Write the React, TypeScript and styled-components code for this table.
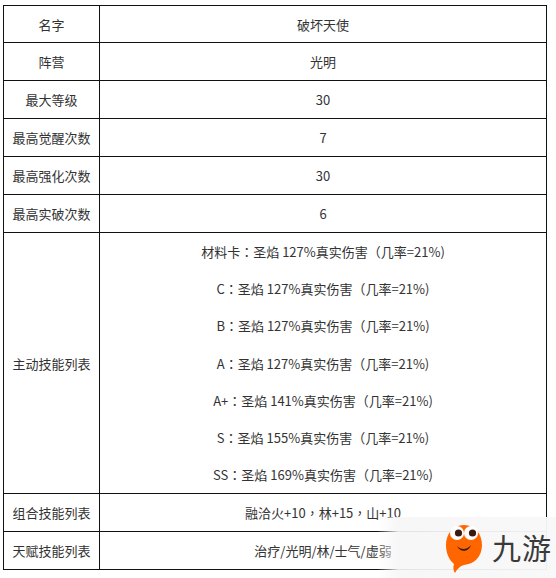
import React from 'react';
import styled, { createGlobalStyle } from 'styled-components';

const GlobalStyle = createGlobalStyle`
  html, body {
    margin: 0;
    padding: 0;
    background: #ffffff;
  }
  body {
    font-family: "Noto Sans CJK SC", "Noto Sans", sans-serif;
  }
`;

const Page = styled.div`
  position: relative;
  width: 556px;
  height: 578px;
  padding: 5px 0 0 3px;
  box-sizing: border-box;
  overflow: hidden;
`;

const Table = styled.table`
  width: 544px;
  border-collapse: collapse;
  table-layout: fixed;
  font-size: 13px;
  color: #333333;
`;

const LabelCell = styled.td`
  width: 95px;
  border: 1px solid #111111;
  text-align: center;
  vertical-align: middle;
  padding: 0;
`;

const ValueCell = styled.td<{ $h: number }>`
  height: ${(p) => p.$h}px;
  border: 1px solid #111111;
  text-align: center;
  vertical-align: middle;
  padding: 0;
`;

const SkillLine = styled.p`
  margin: 0;
  line-height: 37.2px;
`;

// centred full-width punctuation, as the source page renders it
const Punct = styled.span`
  font-family: "Noto Sans CJK TC", "Noto Sans CJK SC", sans-serif;
`;

const Watermark = styled.div`
  position: absolute;
  left: 377px;
  top: 517px;
  width: 179px;
  height: 61px;
  display: flex;
  align-items: center;
  justify-content: flex-end;
  gap: 8px;
  padding-right: 4px;
  box-sizing: border-box;
  background: linear-gradient(
    90deg,
    rgba(246, 246, 246, 0) 0%,
    rgba(246, 246, 246, 0.92) 12%,
    rgba(248, 248, 248, 0.96) 100%
  );
`;

const Brand = styled.span`
  font-family: "Noto Sans CJK SC", sans-serif;
  font-size: 29px;
  font-weight: 400;
  color: #3a3a3a;
  letter-spacing: 1px;
  line-height: 1;
`;

const rows: { label: string; value: string; h: number }[] = [
  { label: '名字', value: '破坏天使', h: 36 },
  { label: '阵营', value: '光明', h: 37 },
  { label: '最大等级', value: '30', h: 37 },
  { label: '最高觉醒次数', value: '7', h: 37 },
  { label: '最高强化次数', value: '30', h: 37 },
  { label: '最高实破次数', value: '6', h: 37 },
];

const skills = [
  { grade: '材料卡', pct: '127' },
  { grade: 'C', pct: '127' },
  { grade: 'B', pct: '127' },
  { grade: 'A', pct: '127' },
  { grade: 'A+', pct: '141' },
  { grade: 'S', pct: '155' },
  { grade: 'SS', pct: '169' },
];

const Logo = () => (
  <svg width="40" height="52" viewBox="0 0 40 52">
    <path
      d="M20 3 C31 3 38 12 38 23 C38 35 30 42 20 43 C16 44 13 47 11 51 C9 48 9 45 10 42 C5 38 2 31 2 23 C2 12 9 3 20 3 Z"
      fill="#ff6600"
    />
    <circle cx="13" cy="11" r="7" fill="#ffffff" />
    <circle cx="27" cy="11" r="7" fill="#ffffff" />
    <circle cx="14.5" cy="11" r="3.6" fill="#3a1a10" />
    <circle cx="28.5" cy="11" r="3.6" fill="#3a1a10" />
    <path d="M13 24 C17 28 23 28 27 23 C25 30 16 31 13 24 Z" fill="#3a1a10" />
  </svg>
);

export default function App() {
  return (
    <>
      <GlobalStyle />
      <Page>
        <Table>
          <tbody>
            {rows.map((r) => (
              <tr key={r.label}>
                <LabelCell>{r.label}</LabelCell>
                <ValueCell $h={r.h}>{r.value}</ValueCell>
              </tr>
            ))}
            <tr>
              <LabelCell>主动技能列表</LabelCell>
              <ValueCell $h={260}>
                {skills.map((s) => (
                  <SkillLine key={s.grade}>
                    {s.grade}
                    <Punct>：</Punct>圣焰 {s.pct}%真实伤害<Punct>（</Punct>几率=21%)
                  </SkillLine>
                ))}
              </ValueCell>
            </tr>
            <tr>
              <LabelCell>组合技能列表</LabelCell>
              <ValueCell $h={37}>
                融洽火+10<Punct>，</Punct>林+15<Punct>，</Punct>山+10
              </ValueCell>
            </tr>
            <tr>
              <LabelCell>天赋技能列表</LabelCell>
              <ValueCell $h={37}>治疗/光明/林/士气/虚弱</ValueCell>
            </tr>
          </tbody>
        </Table>
        <Watermark>
          <Logo />
          <Brand>九游</Brand>
        </Watermark>
      </Page>
    </>
  );
}
